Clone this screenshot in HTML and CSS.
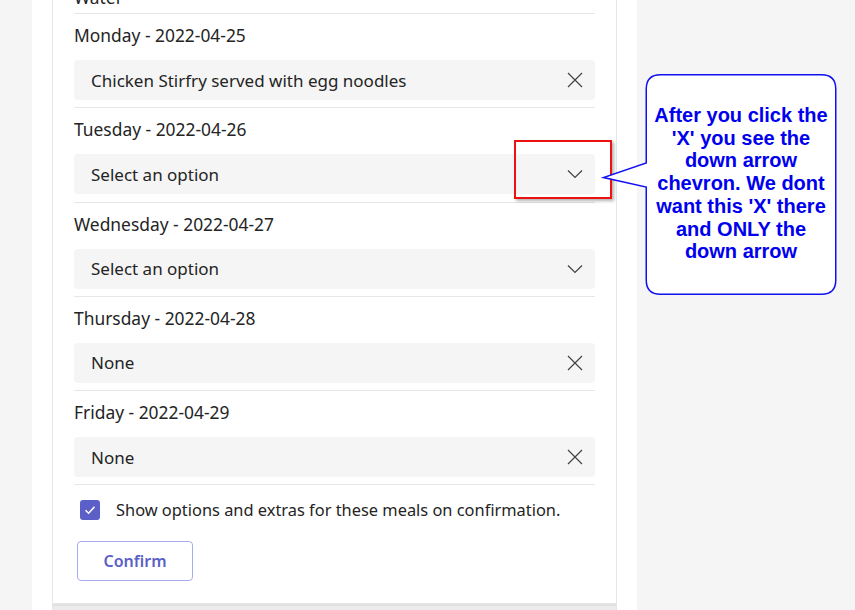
FILE: index.html
```html
<!DOCTYPE html>
<html lang="en">
  <head>
    <meta charset="UTF-8" />
    <title>Weekly meal order</title>
    <link rel="stylesheet" href="styles.css">
  </head>
  <body>
    <div class="page">
      <div class="card">
        <div class="intro">Water</div>

        <div class="field">
          <div class="field-label">Monday - 2022-04-25</div>
          <div class="select">
            <span class="select-value">Chicken Stirfry served with egg noodles</span>
            <svg class="icon" width="16" height="16" viewBox="0 0 16 16"><path d="M1 1 L15 15 M15 1 L1 15" stroke="#424242" stroke-width="1.2" fill="none"/></svg>
          </div>
        </div>

        <div class="field">
          <div class="field-label">Tuesday - 2022-04-26</div>
          <div class="select">
            <span class="select-value">Select an option</span>
            <svg class="icon" width="16" height="16" viewBox="0 0 16 16"><path d="M1 4.5 L8 11.5 L15 4.5" stroke="#424242" stroke-width="1.2" fill="none"/></svg>
          </div>
        </div>

        <div class="field">
          <div class="field-label">Wednesday - 2022-04-27</div>
          <div class="select">
            <span class="select-value">Select an option</span>
            <svg class="icon" width="16" height="16" viewBox="0 0 16 16"><path d="M1 4.5 L8 11.5 L15 4.5" stroke="#424242" stroke-width="1.2" fill="none"/></svg>
          </div>
        </div>

        <div class="field">
          <div class="field-label">Thursday - 2022-04-28</div>
          <div class="select">
            <span class="select-value">None</span>
            <svg class="icon" width="16" height="16" viewBox="0 0 16 16"><path d="M1 1 L15 15 M15 1 L1 15" stroke="#424242" stroke-width="1.2" fill="none"/></svg>
          </div>
        </div>

        <div class="field">
          <div class="field-label">Friday - 2022-04-29</div>
          <div class="select">
            <span class="select-value">None</span>
            <svg class="icon" width="16" height="16" viewBox="0 0 16 16"><path d="M1 1 L15 15 M15 1 L1 15" stroke="#424242" stroke-width="1.2" fill="none"/></svg>
          </div>
        </div>

        <label class="check-row">
          <span class="checkbox">
            <svg width="14" height="14" viewBox="0 0 14 14"><path d="M2.5 7.2 L5.6 10.2 L11.5 3.8" stroke="#fff" stroke-width="1.5" fill="none"/></svg>
          </span>
          Show options and extras for these meals on confirmation.
        </label>

        <button class="confirm-btn">Confirm</button>
      </div>
      <div class="next-card"></div>
    </div>

    <!-- annotation overlay -->
    <div class="highlight"></div>
    <svg class="callout-shape" width="240" height="230" viewBox="600 70 240 230">
      <path d="M660.5 74.75 H821.5 Q835.75 74.75 835.75 89 V280 Q835.75 294.25 821.5 294.25 H660.5 Q646.25 294.25 646.25 280 V187 L603.5 177.5 L646.25 163 V89 Q646.25 74.75 660.5 74.75 Z" fill="#fff" stroke="#1010f0" stroke-width="1.5"/>
    </svg>
    <div class="callout-text">After you click the 'X' you see the down arrow chevron. We dont want this 'X' there and ONLY the down arrow</div>
  </body>
</html>
```

FILE: styles.css
```css
body {
  margin: 0;
  background: #f5f5f5;
  font-family: "Segoe UI", "Noto Sans", sans-serif;
  color: #242424;
  overflow: hidden;
  height: 610px;
}
.page {
  margin-left: 32px;
  width: 565px;
  padding: 0 20px;
  background: #fff;
  height: 610px;
}
.card {
  display: flow-root;
  border: 1px solid #e6e6e6;
  border-top: none;
  padding: 0 21px 22px;
}
.intro {
  margin-top: -14px;
  font-size: 17.4px;
  line-height: 22px;
  padding-bottom: 5px;
  border-bottom: 1px solid #e6e6e6;
}
.field {
  padding: 10px 0 7.25px;
  border-bottom: 1px solid #e6e6e6;
}
.field-label {
  font-size: 17.4px;
  line-height: 22px;
  margin-bottom: 14px;
}
.select {
  height: 40px;
  background: #f5f5f5;
  border-radius: 4px;
  display: flex;
  align-items: center;
  justify-content: space-between;
  padding: 0 12px 0 17px;
  font-size: 17px;
}
.icon {
  display: block;
}
.check-row {
  display: flex;
  align-items: center;
  gap: 16px;
  padding: 15px 0 0 6px;
  font-size: 16.4px;
  line-height: 20px;
}
.checkbox {
  width: 20px;
  height: 20px;
  border-radius: 3px;
  background: #5b5fc7;
  display: flex;
  align-items: center;
  justify-content: center;
}
.confirm-btn {
  margin: 21px 0 0 3px;
  width: 116px;
  height: 40px;
  background: #fff;
  border: 1px solid #a9abf2;
  border-radius: 4px;
  color: #5b5fc7;
  font-family: inherit;
  font-size: 16px;
  font-weight: 600;
  display: block;
}
.next-card {
  height: 30px;
  background: #ebebeb;
  border-top: 2px solid #e0e0e0;
  border-left: 1px solid #e6e6e6;
  border-right: 1px solid #e6e6e6;
}
.highlight {
  position: absolute;
  left: 514px;
  top: 140px;
  width: 94px;
  height: 55px;
  border: 2px solid #ee1111;
  box-shadow: 2px 2px 3px rgba(0, 0, 0, 0.3);
}
.callout-shape {
  position: absolute;
  left: 600px;
  top: 70px;
}
.callout-text {
  position: absolute;
  left: 648px;
  top: 104px;
  width: 186px;
  text-align: center;
  font-family: "Liberation Sans", Arial, sans-serif;
  font-weight: bold;
  font-size: 20px;
  line-height: 22.7px;
  color: #0000ee;
}
```
